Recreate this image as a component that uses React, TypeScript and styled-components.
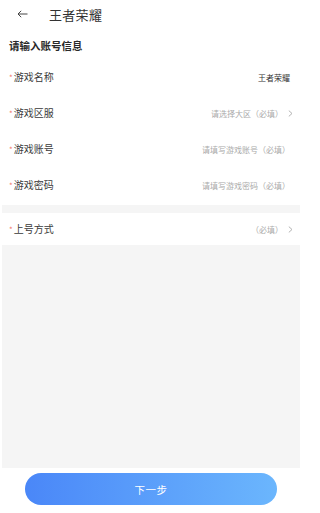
import React from 'react';
import styled, { createGlobalStyle } from 'styled-components';

const GlobalStyle = createGlobalStyle`
  html, body {
    margin: 0;
    padding: 0;
    background: #fff;
  }
  body {
    font-family: "Noto Sans CJK SC", "Noto Sans", sans-serif;
    -webkit-font-smoothing: antialiased;
  }
`;

type Field = {
  label: string;
  value: string;
  filled?: boolean;
  select?: boolean;
};

const fields: Field[] = [
  { label: '游戏名称', value: '王者荣耀', filled: true },
  { label: '游戏区服', value: '请选择大区（必填）', select: true },
  { label: '游戏账号', value: '请填写游戏账号（必填）' },
  { label: '游戏密码', value: '请填写游戏密码（必填）' },
];

const App = () => {
  return (
    <Page>
      <GlobalStyle />
      <Form>
        <Header>
          <BackButton aria-label="返回">
            <svg width="11" height="8" viewBox="0 0 11 8" fill="none">
              <path d="M10.5 4H1M4.2 0.8L1 4l3.2 3.2" stroke="#444" strokeWidth="1" />
            </svg>
          </BackButton>
          <HeaderTitle>王者荣耀</HeaderTitle>
        </Header>

        <SectionTitle>请输入账号信息</SectionTitle>

        {fields.map((f) => (
          <Row key={f.label}>
            <Label>
              <Star>*</Star>
              {f.label}
            </Label>
            <Value $filled={f.filled} $select={f.select}>
              {f.value}
              {f.select && <Chevron />}
            </Value>
          </Row>
        ))}

        <Divider />

        <Row $short>
          <Label>
            <Star>*</Star>
            上号方式
          </Label>
          <Value $select>
            （必填）
            <Chevron />
          </Value>
        </Row>

        <Panel />
      </Form>

      <Footer>
        <NextButton>下一步</NextButton>
      </Footer>
    </Page>
  );
};

const Chevron = () => (
  <ChevronIcon width="5" height="7" viewBox="0 0 5 7" fill="none">
    <path d="M0.8 0.6L4 3.5 0.8 6.4" stroke="#aaa" strokeWidth="0.9" />
  </ChevronIcon>
);

const Page = styled.div`
  width: 310px;
  height: 513px;
  display: flex;
  flex-direction: column;
  overflow: hidden;
  background: #fff;
`;

const Form = styled.div`
  width: 298px;
  margin-left: 2px;
  display: flex;
  flex-direction: column;
`;

const Header = styled.div`
  height: 30px;
  display: flex;
  align-items: center;
  padding-left: 14px;
`;

const BackButton = styled.div`
  width: 12px;
  height: 12px;
  display: flex;
  align-items: center;
  justify-content: center;
  margin-right: 21px;
  margin-top: -2px;
`;

const HeaderTitle = styled.div`
  font-size: 13px;
  font-weight: 400;
  color: #333;
  letter-spacing: 0.3px;
  margin-top: -2px;
`;

const SectionTitle = styled.div`
  font-size: 10.5px;
  font-weight: 700;
  color: #2a2a2a;
  line-height: 20px;
  padding: 6px 0 3px 7px;
`;

const Row = styled.div<{ $short?: boolean }>`
  height: ${(p) => (p.$short ? '32px' : '36px')};
  display: flex;
  align-items: center;
  justify-content: space-between;
  padding: 0 7px 0 7px;
`;

const Label = styled.div`
  display: flex;
  align-items: center;
  font-size: 10px;
  color: #3a3a3a;
  margin-top: -2px;
`;

const Star = styled.span`
  color: #f2786a;
  font-size: 8px;
  line-height: 1;
  margin-right: 1px;
  transform: translateY(1.5px);
`;

const Value = styled.div<{ $filled?: boolean; $select?: boolean }>`
  display: flex;
  align-items: center;
  font-size: 8px;
  color: ${(p) => (p.$filled ? '#333' : '#aaa')};
  padding-right: ${(p) => (p.$select ? '0' : '3px')};
`;

const ChevronIcon = styled.svg`
  margin-left: 5px;
`;

const Divider = styled.div`
  height: 8px;
  margin-top: 2px;
  background: #f5f5f5;
`;

const Panel = styled.div`
  height: 223px;
  background: #f5f5f5;
`;

const Footer = styled.div`
  display: flex;
  padding: 5px 0 0 25px;
`;

const NextButton = styled.button`
  width: 252px;
  height: 32px;
  border: none;
  border-radius: 16px;
  background: linear-gradient(to right, #4a87f8, #6bb6fd);
  color: #fff;
  font-family: "Noto Sans CJK SC", sans-serif;
  font-size: 10.5px;
  letter-spacing: 0.5px;
  cursor: pointer;
`;

export default App;
